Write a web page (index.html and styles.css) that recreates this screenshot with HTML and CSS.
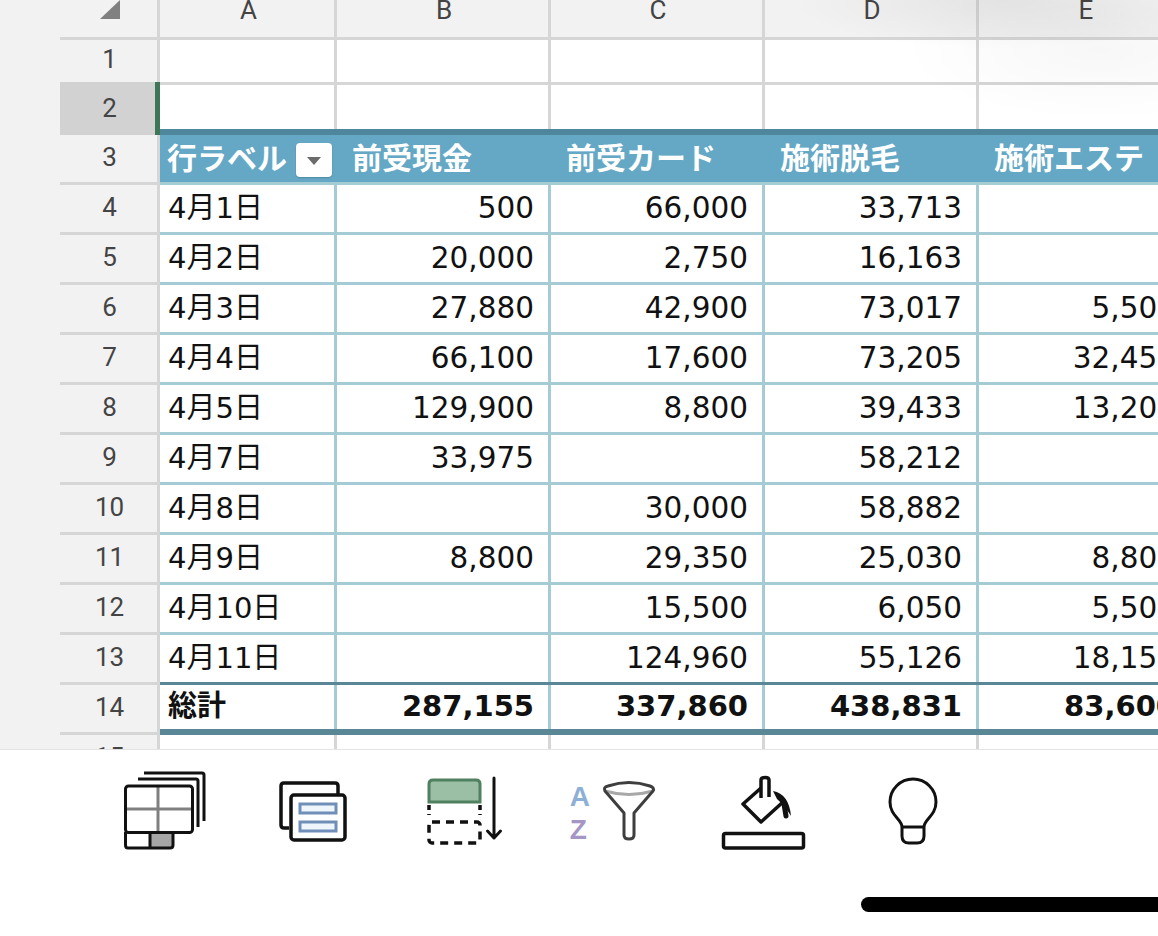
FILE: index.html
```html
<!DOCTYPE html>
<html lang="ja">
<head>
	<meta charset="UTF-8">
	<title>ピボットテーブル</title>
	<link rel="stylesheet" href="styles.css">
</head>
<body>
	<div class="sheet">
		<div class="row col-heads">
			<div class="row-head corner"><span class="corner-tri"></span></div>
			<div class="col-head">A</div>
			<div class="col-head">B</div>
			<div class="col-head">C</div>
			<div class="col-head">D</div>
			<div class="col-head">E</div>
		</div>
		<div class="row row-1">
			<div class="row-head">1</div>
			<div class="cell"></div><div class="cell"></div><div class="cell"></div><div class="cell"></div><div class="cell"></div>
		</div>
		<div class="row row-2">
			<div class="row-head selected">2<span class="sel-bar"></span></div>
			<div class="cell"></div><div class="cell"></div><div class="cell"></div><div class="cell"></div><div class="cell"></div>
		</div>
		<div class="row row-title">
			<div class="row-head">3</div>
			<div class="cell th first">行ラベル<span class="drop"><span class="drop-tri"></span></span></div>
			<div class="cell th">前受現金</div>
			<div class="cell th">前受カード</div>
			<div class="cell th">施術脱毛</div>
			<div class="cell th">施術エステ</div>
		</div>
		<div class="row data">
			<div class="row-head">4</div>
			<div class="cell label">4月1日</div><div class="cell num">500</div><div class="cell num">66,000</div><div class="cell num">33,713</div><div class="cell num"></div>
		</div>
		<div class="row data">
			<div class="row-head">5</div>
			<div class="cell label">4月2日</div><div class="cell num">20,000</div><div class="cell num">2,750</div><div class="cell num">16,163</div><div class="cell num"></div>
		</div>
		<div class="row data">
			<div class="row-head">6</div>
			<div class="cell label">4月3日</div><div class="cell num">27,880</div><div class="cell num">42,900</div><div class="cell num">73,017</div><div class="cell num">5,500</div>
		</div>
		<div class="row data">
			<div class="row-head">7</div>
			<div class="cell label">4月4日</div><div class="cell num">66,100</div><div class="cell num">17,600</div><div class="cell num">73,205</div><div class="cell num">32,450</div>
		</div>
		<div class="row data">
			<div class="row-head">8</div>
			<div class="cell label">4月5日</div><div class="cell num">129,900</div><div class="cell num">8,800</div><div class="cell num">39,433</div><div class="cell num">13,200</div>
		</div>
		<div class="row data">
			<div class="row-head">9</div>
			<div class="cell label">4月7日</div><div class="cell num">33,975</div><div class="cell num"></div><div class="cell num">58,212</div><div class="cell num"></div>
		</div>
		<div class="row data">
			<div class="row-head">10</div>
			<div class="cell label">4月8日</div><div class="cell num"></div><div class="cell num">30,000</div><div class="cell num">58,882</div><div class="cell num"></div>
		</div>
		<div class="row data">
			<div class="row-head">11</div>
			<div class="cell label">4月9日</div><div class="cell num">8,800</div><div class="cell num">29,350</div><div class="cell num">25,030</div><div class="cell num">8,800</div>
		</div>
		<div class="row data">
			<div class="row-head">12</div>
			<div class="cell label">4月10日</div><div class="cell num"></div><div class="cell num">15,500</div><div class="cell num">6,050</div><div class="cell num">5,500</div>
		</div>
		<div class="row data last">
			<div class="row-head">13</div>
			<div class="cell label">4月11日</div><div class="cell num"></div><div class="cell num">124,960</div><div class="cell num">55,126</div><div class="cell num">18,150</div>
		</div>
		<div class="row data total">
			<div class="row-head">14</div>
			<div class="cell label">総計</div><div class="cell num">287,155</div><div class="cell num">337,860</div><div class="cell num">438,831</div><div class="cell num">83,600</div>
		</div>
		<div class="row row-15">
			<div class="row-head">15</div>
			<div class="cell"></div><div class="cell"></div><div class="cell"></div><div class="cell"></div><div class="cell"></div>
		</div>
		<div class="shine"></div>
	</div>

	<div class="toolbar">
		<div class="tools">
			<div class="tool">
				<svg viewBox="0 0 100 90" width="100" height="90" fill="none" stroke="#111" stroke-width="3">
					<path d="M29 7H87Q89 7 89 9V55"/>
					<path d="M23 13H81Q83 13 83 15V61"/>
					<path d="M43 20V66M11 43H76" stroke="#808080"/>
					<rect x="35" y="67" width="23" height="15" fill="#a6a6a6" stroke="none"/>
					<rect x="10.500" y="20" width="67" height="46.500" rx="3"/>
					<path d="M10.500 66V79Q10.500 82 13 82H55Q58 82 58 79V66M35 66V82"/>
				</svg>
			</div>
			<div class="tool">
				<svg viewBox="0 0 100 90" width="100" height="90" fill="none" stroke="#111" stroke-width="3.500">
					<path d="M25 62H20Q17 62 17 59V20Q17 17 20 17H71Q74 17 74 20V28"/>
					<rect x="27" y="29" width="54" height="45" rx="3"/>
					<rect x="36" y="38" width="36" height="9" fill="#eef6fc" stroke="#6f8fb8" stroke-width="3"/>
					<rect x="36" y="56" width="36" height="9" fill="#eef6fc" stroke="#6f8fb8" stroke-width="3"/>
				</svg>
			</div>
			<div class="tool">
				<svg viewBox="0 0 100 90" width="100" height="90" fill="none" stroke="#111" stroke-width="3">
					<path d="M15 36V18Q15 14 19 14H62Q66 14 66 18V36Z" fill="#9bbfa4" stroke="#4f8060"/>
					<path d="M15 39V49M66 39V49" stroke-width="3.500" stroke-dasharray="5 4"/>
					<rect x="15" y="56" width="51" height="21" rx="3" stroke-width="3.500" stroke-dasharray="8 6"/>
					<path d="M80 12V72M73.500 65L80 72L86.500 65" stroke-linecap="round" stroke-linejoin="round"/>
				</svg>
			</div>
			<div class="tool">
				<span class="az a">A</span>
				<span class="az z">Z</span>
				<svg viewBox="0 0 100 90" width="100" height="90" fill="none" stroke="#3e3e3e" stroke-width="3">
					<path d="M41 25Q65 32 89 25" stroke="#a8a8a8"/>
					<path d="M41 25Q39 21 44 20Q65 13 86 20Q91 22 89 25L70 47V69Q70 73 65 73Q60 73 60 69V47Z" stroke-linejoin="round"/>
				</svg>
			</div>
			<div class="tool">
				<svg viewBox="0 0 100 90" width="100" height="90" fill="none" stroke="#111" stroke-width="3.500">
					<rect x="10.500" y="67.500" width="80" height="14.500" rx="2"/>
					<path d="M48 22L30 38L48 56L70 36" stroke-linejoin="round"/>
					<path d="M48 32V14Q48 11.500 52 11.500Q56 11.500 56 14V31" stroke-linejoin="round"/>
					<path d="M60 25Q76 28 78 50Q72 40 64 33Z" fill="#111" stroke="none"/>
					<path d="M71 38L73 50" stroke-width="5" stroke-linecap="round"/>
				</svg>
			</div>
			<div class="tool">
				<svg viewBox="0 0 100 90" width="100" height="90" fill="none" stroke="#111" stroke-width="3">
					<path d="M39 61V70Q39 77 46 77H54Q61 77 61 70V61C61 53 73 50 73 36A23 23 0 0 0 27 36C27 50 39 53 39 61ZM39 61H61"/>
				</svg>
			</div>
		</div>
		<div class="home-bar"></div>
	</div>
</body>
</html>
```

FILE: styles.css
```css
*{
	margin: 0;
	padding: 0;
	box-sizing: border-box;
}
html,body{
	width: 1158px;
	height: 936px;
	overflow: hidden;
	background-color: #fff;
}
body{
	font-family: "DejaVu Sans", "Noto Sans CJK JP", sans-serif;
	color: #111;
}
.sheet{
	position: relative;
	height: 749px;
	padding-left: 60px;
	overflow: hidden;
	background-color: #f2f2f2;
}
.row{
	position: relative;
	display: grid;
	grid-template-columns: 100px 177px 214px 214px 214px 214px;
	width: 1133px;
	height: 50px;
}
.row-head{
	position: relative;
	display: flex;
	align-items: center;
	justify-content: center;
	padding: 0 0 3px 2px;
	font-family: Roboto, sans-serif;
	font-size: 26px;
	color: #444;
	background-color: #f2f2f2;
	border-right: 3px solid #d6d6d6;
	border-bottom: 3px solid #d6d6d6;
}
.col-head{
	padding-left: 3px;
	line-height: 20px;
	text-align: center;
	font-family: Roboto, sans-serif;
	font-size: 26px;
	color: #444;
	background-color: #f2f2f2;
	border-right: 3px solid #d6d6d6;
	border-bottom: 3px solid #d6d6d6;
}
.col-heads{
	height: 40px;
}
.corner-tri{
	position: absolute;
	left: 40px;
	top: 0;
	width: 20px;
	height: 19px;
	background-color: #808080;
	clip-path: polygon(100% 0, 100% 100%, 0 100%);
}
.cell{
	display: flex;
	align-items: center;
	white-space: nowrap;
	background-color: #fff;
	border-right: 3px solid #d6d6d6;
	border-bottom: 3px solid #d6d6d6;
}
.row-1{
	height: 45px;
}
.row-1 .row-head{
	padding-bottom: 5px;
	border-bottom-color: #d2d2d2;
}
/* dark rule over the vertical lines, table top and total */
.row-2::after,
.last::after,
.total::after{
	content: "";
	position: absolute;
	left: 100px;
	right: 0;
	bottom: 0;
	height: 6px;
	background-color: #4e869c;
}
.last::after{
	height: 3px;
	background-color: #5a8796;
}
.total::after{
	background-color: #5a8796;
}
.row-2 .row-head{
	border-bottom: none;
	padding-bottom: 5px;
}
.row-head.selected{
	background-color: #d2d2d2;
}
.sel-bar{
	position: absolute;
	right: -3px;
	top: -3px;
	width: 5px;
	height: 53px;
	background-color: #3f7657;
}
.row-title .cell.th{
	position: relative;
	padding: 0 0 6px 15px;
	font-family: "Noto Sans CJK JP", sans-serif;
	font-size: 30px;
	font-weight: 700;
	line-height: 36px;
	color: #fff;
	background-color: #65a8c5;
	border-right: none;
	border-bottom: 3px solid #a5cbd5;
}
.row-title .cell.th.first{
	padding-left: 7px;
}
.drop{
	position: absolute;
	left: 136px;
	top: 8px;
	width: 36px;
	height: 34px;
	background-color: #fff;
	border-radius: 4px;
	box-shadow: 0 1px 2px rgba(0,0,0,.2);
}
.drop-tri{
	position: absolute;
	left: 11px;
	top: 14px;
	width: 14px;
	height: 8px;
	background-color: #6b6b6b;
	clip-path: polygon(0 0, 100% 0, 50% 100%);
}
.data .cell{
	padding-bottom: 2px;
	font-size: 29.500px;
	line-height: 40px;
	border-right-color: #a5cbd5;
	border-bottom-color: #a5cbd5;
}
.data .label{
	padding-left: 8px;
	font-size: 29px;
}
.data .num{
	justify-content: flex-end;
	padding-right: 14px;
}
.total .cell{
	font-size: 29px;
	font-weight: 700;
	border-bottom-width: 6px;
}
.row-15 .cell{
	border-bottom: none;
}
.shine{
	position: absolute;
	left: 0;
	top: 0;
	width: 100%;
	height: 140px;
	pointer-events: none;
	background: radial-gradient(ellipse 210px 50px at 1000px 0, rgba(0,0,0,.06), rgba(0,0,0,0)), radial-gradient(ellipse 200px 70px at 1100px 50px, rgba(0,0,0,.03), rgba(0,0,0,0));
}
.toolbar{
	height: 187px;
	border-top: 1px solid #e4e4e4;
	background-color: #fff;
}
.tools{
	display: flex;
	padding: 16px 0 0 90px;
}
.tool{
	position: relative;
	display: flex;
	justify-content: center;
	flex: 0 0 149.600px;
}
.az{
	position: absolute;
	left: 31px;
	font-family: "Liberation Sans", sans-serif;
	font-size: 28px;
	font-weight: 700;
	line-height: 28px;
}
.az.a{
	top: 17px;
	color: #8fb0d6;
}
.az.z{
	top: 50px;
	color: #a596c6;
}
.home-bar{
	width: 320px;
	height: 15px;
	margin: 41px 0 0 861px;
	background-color: #000;
	border-radius: 8px;
}
```
